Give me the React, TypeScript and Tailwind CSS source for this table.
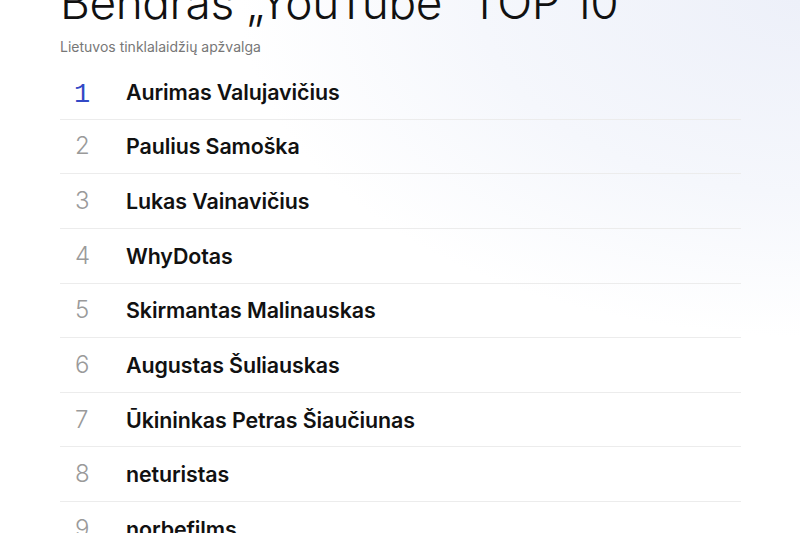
const creators = [
  "Aurimas Valujavičius",
  "Paulius Samoška",
  "Lukas Vainavičius",
  "WhyDotas",
  "Skirmantas Malinauskas",
  "Augustas Šuliauskas",
  "Ūkininkas Petras Šiaučiunas",
  "neturistas",
  "norbefilms",
  "Dalius Mačiulis",
];

function App() {
  return (
    <div className="h-[533px] w-[800px] overflow-hidden bg-[radial-gradient(ellipse_100%_90%_at_100%_0%,#edf0f9_0%,#f5f7fc_40%,#ffffff_70%)] font-['Inter',sans-serif]">
      <div className="ml-[60px] flex w-[681px] flex-col">
        <h1 className="-mt-[21px] whitespace-nowrap text-[46px] font-light leading-[46px] tracking-[-0.45px] text-[#111111]">
          Bendras „YouTube“ TOP 10
        </h1>
        <p className="mt-[12px] text-[14px] leading-[20px] text-[#777777]">
          Lietuvos tinklalaidžių apžvalga
        </p>

        <ul className="mt-[8px] flex flex-col">
          {creators.map((name, i) => (
            <li
              key={name}
              className="flex h-[54.64px] items-center border-b border-[#ececec]"
            >
              {i === 0 ? (
                <span className="w-[66px] pl-[14px] pt-[7px] font-['Liberation_Mono',monospace] text-[27px] leading-none text-[#3349c6]">
                  1
                </span>
              ) : (
                <span className="w-[66px] pl-[15px] text-[24px] font-light text-[#9a9a9a]">
                  {i + 1}
                </span>
              )}
              <span className="text-[21.4px] font-semibold tracking-[-0.1px] text-[#111111]">
                {name}
              </span>
            </li>
          ))}
        </ul>
      </div>
    </div>
  );
}

export default App;
